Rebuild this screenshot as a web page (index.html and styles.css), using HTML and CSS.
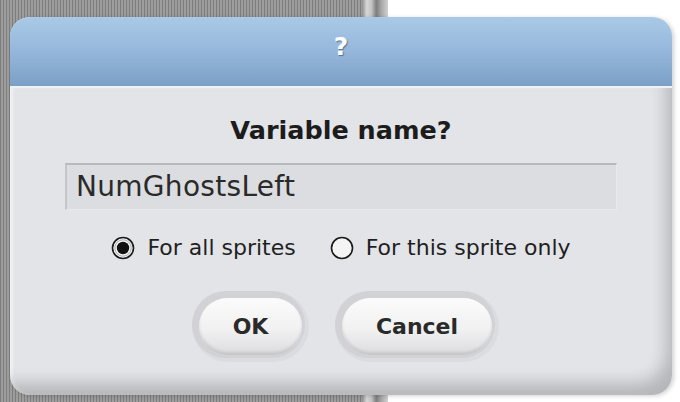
FILE: index.html
```html
<!DOCTYPE html>
<html lang="en">
<head>
<meta charset="utf-8">
<title>Variable name?</title>
<link rel="stylesheet" href="styles.css">
</head>
<body>
  <div class="dialog">
    <div class="titlebar">?</div>
    <div class="content">
      <div class="prompt">Variable name?</div>
      <div class="field">NumGhostsLeft</div>
      <div class="choices">
        <label class="choice">
          <svg class="radio" viewBox="0 0 24 24" width="24" height="24">
            <circle cx="12" cy="12" r="10.5" fill="#f4f4f4" stroke="#1a1a1a" stroke-width="1.6"/>
            <circle cx="12" cy="12" r="8.2" fill="none" stroke="#9a9a9a" stroke-width="0.8"/>
            <circle cx="12" cy="12" r="6.2" fill="#111"/>
          </svg>
          <span>For all sprites</span>
        </label>
        <label class="choice">
          <svg class="radio" viewBox="0 0 24 24" width="24" height="24">
            <circle cx="12" cy="12" r="10.5" fill="#f4f4f4" stroke="#1a1a1a" stroke-width="1.6"/>
          </svg>
          <span>For this sprite only</span>
        </label>
      </div>
      <div class="buttons">
        <div class="btn btn-ok">OK</div>
        <div class="btn btn-cancel">Cancel</div>
      </div>
    </div>
  </div>
</body>
</html>
```

FILE: styles.css
```css
html, body {
  margin: 0;
  height: 100%;
}

body {
  padding: 17px 0 0 10px;
  box-sizing: border-box;
  font-family: "DejaVu Sans", Verdana, sans-serif;
  background:
    linear-gradient(90deg, #8d8d8d 0, #d6d6d6 18%, #c4c4c4 36%, #7e7e7e 55%, #a9a9a9 75%, #d2d2d2 100%) 362px 0 / 26px 100% no-repeat,
    repeating-linear-gradient(90deg, #7d7d7d 0 1px, #9d9d9d 1px 3px) 0 0 / 362px 100% no-repeat,
    #ffffff;
}

.dialog {
  width: 662px;
  height: 378px;
  border-radius: 20px;
  overflow: hidden;
  display: flex;
  flex-direction: column;
  background: #e3e4e8;
  box-shadow: 2px 1px 4px rgba(0, 0, 0, 0.18);
}

.titlebar {
  height: 71px;
  flex: none;
  display: flex;
  align-items: center;
  justify-content: center;
  color: #ffffff;
  font-weight: bold;
  font-size: 25px;
  text-shadow: 1px 1px 1px rgba(40, 60, 90, 0.55);
  background: linear-gradient(180deg, #a9c9e6 0%, #97b9dc 45%, #7b9fc6 100%);
  border-bottom: 2px solid #f0f1f3;
  padding-bottom: 11px;
  box-sizing: border-box;
}

.content {
  flex: 1;
  display: flex;
  flex-direction: column;
  align-items: center;
  box-shadow:
    inset -16px -22px 16px -10px rgba(0, 0, 0, 0.20),
    inset 4px 0 4px -2px rgba(255, 255, 255, 0.7);
  border-radius: 0 0 20px 20px;
}

.prompt {
  margin-top: 27px;
  font-size: 25.5px;
  font-weight: bold;
  color: #1c1c1c;
  line-height: 30px;
}

.field {
  margin-top: 18px;
  width: 552px;
  height: 47px;
  box-sizing: border-box;
  padding: 0 0 0 9px;
  background: #dcdde0;
  border-top: 2px solid #b8b9bc;
  border-left: 2px solid #c4c5c8;
  border-right: 1px solid #e9eaec;
  border-bottom: 1px solid #e9eaec;
  color: #2a2a2a;
  font-size: 28px;
  letter-spacing: 0.3px;
  line-height: 43px;
}

.choices {
  margin-top: 24px;
  display: flex;
  gap: 34px;
  margin-left: 0;
}

.choice {
  display: flex;
  align-items: center;
  gap: 12px;
  font-size: 22px;
  color: #1f1f1f;
  line-height: 28px;
}

.radio {
  display: block;
}

.buttons {
  margin-top: 36px;
  display: flex;
  gap: 40px;
  margin-left: 9px;
}

.btn {
  height: 57px;
  border-radius: 29px;
  display: flex;
  align-items: center;
  justify-content: center;
  font-weight: bold;
  font-size: 22px;
  color: #2a2a2a;
  background: linear-gradient(180deg, #fbfbfb 0%, #f1f1f2 55%, #dcdcde 100%);
  box-shadow:
    inset 0 -3px 3px rgba(0, 0, 0, 0.10),
    -2px -2px 0 5px rgba(200, 201, 205, 0.55),
    0 0 0 7px rgba(214, 215, 219, 0.6);
}

.btn-ok {
  width: 103px;
}

.btn-cancel {
  width: 150px;
}
```
